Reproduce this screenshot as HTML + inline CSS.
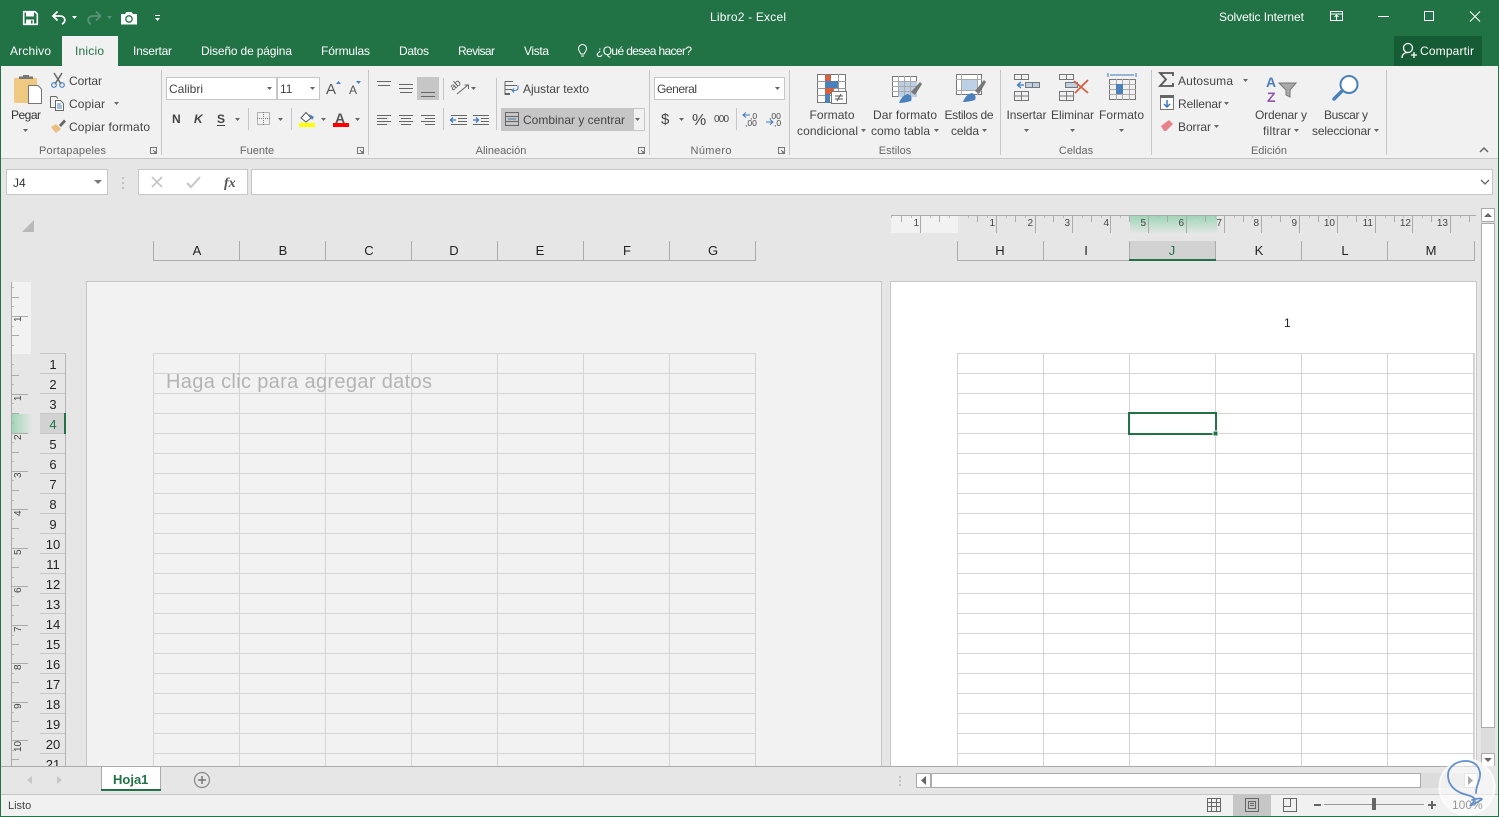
<!DOCTYPE html>
<html lang="es"><head><meta charset="utf-8"><title>Libro2 - Excel</title>
<style>
html,body{margin:0;padding:0;background:#e6e6e6;width:1499px;height:817px;overflow:hidden}
svg{display:block;position:absolute;left:0;top:0}
text{font-family:"Liberation Sans",sans-serif;font-size:12px;fill:#444}
.w{fill:#fff}.m{text-anchor:middle}.g{fill:#666;font-size:11px;text-anchor:middle}
.h{fill:#222;text-anchor:middle;font-size:13px}.r{fill:#222;text-anchor:middle;font-size:13px}
.v{fill:#444;font-size:10px}
</style></head><body>
<svg width="1499" height="817" viewBox="0 0 1499 817" xmlns="http://www.w3.org/2000/svg">
<defs>
<polygon id="c" points="0,0 5,0 2.5,3" fill="#666"/>
<pattern id="grid" x="153" y="353" width="86" height="20" patternUnits="userSpaceOnUse"><path d="M0 .5H86M.5 0V20" stroke="#d4d4d4" fill="none"/></pattern>
<pattern id="grid2" x="957" y="353" width="86" height="20" patternUnits="userSpaceOnUse"><path d="M0 .5H86M.5 0V20" stroke="#d4d4d4" fill="none"/></pattern>
<linearGradient id="gv" x1="0" y1="0" x2="0" y2="1"><stop offset="0" stop-color="#9fd6b8"/><stop offset="1" stop-color="#e6e6e6"/></linearGradient>
<linearGradient id="gh" x1="0" y1="0" x2="1" y2="0"><stop offset="0" stop-color="#9fd6b8"/><stop offset="1" stop-color="#e6e6e6"/></linearGradient>
</defs>

<!-- frame / backgrounds -->
<rect width="1499" height="817" fill="#217346"/>
<rect x="1" y="66" width="1497" height="750" fill="#e6e6e6"/>
<rect x="1" y="66" width="1497" height="92" fill="#f1f1f1"/>
<rect x="1" y="158" width="1497" height="1" fill="#c6c6c6"/>

<!-- QAT -->
<g fill="none" stroke="#fff">
<path d="M23.700 11.700H35L37.300 14V24.300H23.700Z" stroke-width="1.600"/>
<rect x="26" y="12" width="8" height="4.500" fill="#fff" stroke="none"/>
<rect x="26" y="19.500" width="8" height="5" fill="#fff" stroke="none"/><rect x="31" y="20.500" width="1.600" height="3" fill="#217346" stroke="none"/>
<path d="M57.500 11.500L53 16L57.500 20.500M53.500 16H60C65.500 16 66.500 22 62 24" stroke-width="1.800"/>
</g>
<polygon points="72,16 77,16 74.500,19" fill="#fff"/>
<path d="M96 11.500L100.500 16L96 20.500M100 16H93C87.500 16 86.500 22 91 24" fill="none" stroke="#5a9478" stroke-width="1.800"/>
<polygon points="107,16 112,16 109.500,19" fill="#5a9478"/>
<path d="M121 14H125L126.500 12H131.500L133 14H137V24.500H121Z" fill="#fff"/>
<circle cx="129" cy="19" r="3.200" fill="none" stroke="#217346" stroke-width="1.300"/>
<rect x="155" y="15" width="5" height="1" fill="#fff"/><polygon points="155,18 160,18 157.500,21" fill="#fff"/>

<!-- title -->
<text x="710" y="21" class="w" textLength="76">Libro2  -  Excel</text>
<text x="1219" y="21" class="w" textLength="85">Solvetic Internet</text>
<g fill="none" stroke="#fff">
<rect x="1330.500" y="11.500" width="12" height="9"/><path d="M1331 14H1342M1336.500 20V15.500M1334.500 17L1336.500 15L1338.500 17"/>
<path d="M1378 16.500H1389"/>
<rect x="1424.500" y="11.500" width="9" height="9"/>
<path d="M1470 11.500L1480 21.500M1480 11.500L1470 21.500"/>
</g>

<!-- tabs -->
<rect x="62" y="36" width="56" height="30" fill="#f1f1f1"/>
<text x="10" y="55" class="w" textLength="41">Archivo</text>
<text x="75" y="55" style="fill:#217346" textLength="29">Inicio</text>
<text x="133" y="55" class="w" textLength="39">Insertar</text>
<text x="201" y="55" class="w" textLength="91">Diseño de página</text>
<text x="321" y="55" class="w" textLength="49">Fórmulas</text>
<text x="399" y="55" class="w" textLength="30">Datos</text>
<text x="458" y="55" class="w" textLength="37">Revisar</text>
<text x="524" y="55" class="w" textLength="25">Vista</text>
<path d="M581 54C579 51 578.500 50 578.500 48.500A4 4 0 0 1 586.500 48.500C586.500 50 586 51 584 54ZM581 56H584" fill="none" stroke="#fff"/>
<text x="596" y="55" class="w" textLength="96">¿Qué desea hacer?</text>
<rect x="1394" y="36" width="88" height="30" fill="#155b33"/>
<circle cx="1408" cy="48" r="4.500" fill="none" stroke="#fff" stroke-width="1.300"/>
<path d="M1402 58C1402 54 1405 52.500 1408 52.500M1411 55H1417M1414 52V58" fill="none" stroke="#fff" stroke-width="1.300"/>
<text x="1420" y="55" class="w" textLength="54">Compartir</text>

<!-- ribbon separators -->
<g fill="#c6c6c6"><rect x="161" y="70" width="1" height="85"/><rect x="368" y="70" width="1" height="85"/><rect x="649" y="70" width="1" height="85"/><rect x="789" y="70" width="1" height="85"/><rect x="1000" y="70" width="1" height="85"/><rect x="1151" y="70" width="1" height="85"/><rect x="1386" y="70" width="1" height="85"/>
<rect x="248" y="108" width="1" height="22"/><rect x="291" y="108" width="1" height="22"/><rect x="443" y="78" width="1" height="22"/><rect x="443" y="108" width="1" height="22"/><rect x="496" y="78" width="1" height="52"/><rect x="736" y="108" width="1" height="22"/></g>

<!-- group labels -->
<text x="72.500" y="154" class="g" textLength="67">Portapapeles</text><text x="257" y="154" class="g">Fuente</text><text x="501" y="154" class="g">Alineación</text><text x="711" y="154" class="g" textLength="41">Número</text><text x="895" y="154" class="g">Estilos</text><text x="1076" y="154" class="g">Celdas</text><text x="1269" y="154" class="g">Edición</text>
<g fill="none" stroke="#777"><path d="M150.500 147.500H156.500V153.500H150.500ZM153 150L156 153M156 151V153H154"/><path d="M357.500 147.500H363.500V153.500H357.500ZM360 150L363 153M363 151V153H361"/><path d="M638.500 147.500H644.500V153.500H638.500ZM641 150L644 153M644 151V153H642"/><path d="M778.500 147.500H784.500V153.500H778.500ZM781 150L784 153M784 151V153H782"/></g>
<path d="M1480 152L1484 148L1488 152" fill="none" stroke="#666" stroke-width="1.500"/>

<!-- portapapeles -->
<path d="M15 78H37V85H28V103H16Q14 103 14 101V79Q14 78 15 78Z" fill="#efc981"/>
<path d="M19 79V76.500H23V75H29V76.500H33V79Z" fill="#777"/>
<path d="M28.500 85.500H38L41.500 89V103.500H28.500Z" fill="#fff" stroke="#777"/>
<text x="11" y="119" style="fill:#333" textLength="30">Pegar</text><use href="#c" x="23" y="129"/>
<path d="M54 73L61 84M62 73L55 84" stroke="#666" stroke-width="1.500" fill="none"/><circle cx="54" cy="85" r="2.300" fill="none" stroke="#4a80c0" stroke-width="1.200"/><circle cx="62" cy="85" r="2.300" fill="none" stroke="#4a80c0" stroke-width="1.200"/>
<text x="69" y="85" textLength="33">Cortar</text>
<path d="M50.500 96.500H56L58 98.500M50.500 96.500V107.500H55" fill="none" stroke="#666"/><path d="M55.500 100.500H60.500L63.500 103.500V110.500H55.500Z" fill="#fff" stroke="#666"/><path d="M57 104H61M57 106H62M57 108H62" stroke="#4a80c0"/>
<text x="69" y="108" textLength="36">Copiar</text><use href="#c" x="114" y="102"/>
<path d="M51 127L56 124L61 129L56 133Q53 130 51 127Z" fill="#e8bf7d"/><path d="M59 125L64 119.500L66 121.500L61 127Z" fill="#666"/>
<text x="69" y="131" textLength="81">Copiar formato</text>

<!-- fuente -->
<rect x="166.500" y="77.500" width="110" height="22" fill="#fff" stroke="#c6c6c6"/><rect x="277.500" y="77.500" width="42" height="22" fill="#fff" stroke="#c6c6c6"/>
<text x="169" y="93" textLength="34">Calibri</text><text x="280" y="93">11</text>
<use href="#c" x="267" y="87"/><use href="#c" x="310" y="87"/>
<text x="326" y="94" style="font-size:15px;fill:#555">A</text><polygon points="336,84 341,84 338.500,81" fill="#4a80c0"/>
<text x="349" y="94" style="font-size:12px;fill:#555">A</text><polygon points="356,81 361,81 358.500,84" fill="#4a80c0"/>
<text x="172" y="123" style="font-weight:bold;font-size:12px">N</text>
<text x="194" y="123" style="font-weight:bold;font-style:italic;font-size:12px">K</text>
<text x="217" y="123" style="font-weight:bold;font-size:12px">S</text><rect x="217" y="125" width="8" height="1" fill="#444"/><use href="#c" x="235" y="118"/>
<rect x="257.500" y="112.500" width="12" height="12" fill="none" stroke="#777" stroke-dasharray="1 1"/><path d="M263.500 112V125M257 118.500H270" stroke="#777" stroke-dasharray="1 1"/><use href="#c" x="278" y="118"/>
<path d="M301 118L306 112.500L311 118L306 122Z" fill="#fff" stroke="#555"/><path d="M309 114L314 117L312 120Z" fill="#4a80c0"/><rect x="299" y="123" width="16" height="4" fill="#ff0"/><use href="#c" x="321" y="118"/>
<text x="335" y="123" style="font-size:14px;font-weight:bold;fill:#555">A</text><rect x="333" y="123" width="16" height="4" fill="#f00"/><use href="#c" x="355" y="118"/>

<!-- alineacion -->
<rect x="417" y="77" width="22" height="23" fill="#c6c6c6"/>
<g stroke="#666" fill="none"><path d="M377 81.500H391M378 85.500H390"/><path d="M399 84.500H413M399 88.500H413M400 92.500H412"/><path d="M421 92.500H435M421 96.500H435"/>
<path d="M377 115.500H391M377 118.500H387M377 121.500H391M377 124.500H387"/><path d="M399 115.500H413M401 118.500H411M399 121.500H413M401 124.500H411"/><path d="M421 115.500H435M425 118.500H435M421 121.500H435M425 124.500H435"/>
<path d="M451 115.500H467M458 118.500H467M458 121.500H467M451 124.500H467M473 115.500H489M481 118.500H489M481 121.500H489M473 124.500H489"/></g>
<path d="M456 120H451M453 117.500L450.500 120L453 122.500" stroke="#3c78c0" stroke-width="1.300" fill="none"/><path d="M473 120H478M476 117.500L478.500 120L476 122.500" stroke="#3c78c0" stroke-width="1.300" fill="none"/>
<path d="M457 94L468 85M464.500 85H468.500V89" stroke="#666" fill="none"/><text x="453" y="91" style="font-size:10px;fill:#555" transform="rotate(-40 453 91)">ab</text><use href="#c" x="471" y="87"/>
<path d="M505 81.500H513M505 81.500V94.500H510M505 85.500H517M505 89.500H512M505 93.500H510" stroke="#666" fill="none"/><path d="M518 85.500V88C518 90.500 516 90.500 512 90.500M514 88.500L512 90.500L514 92.500" stroke="#3c78c0" fill="none"/>
<text x="523" y="93" textLength="66">Ajustar texto</text>
<rect x="501" y="108" width="132" height="23" fill="#c6c6c6"/><rect x="633.500" y="108.500" width="11" height="22" fill="#f1f1f1" stroke="#c6c6c6"/>
<rect x="505.500" y="112.500" width="13" height="13" fill="none" stroke="#666"/><path d="M506 116.500H518M506 121.500H518" stroke="#666"/><path d="M508 119H516" stroke="#3c78c0"/>
<text x="523" y="124" textLength="102">Combinar y centrar</text><use href="#c" x="635" y="118"/>

<!-- numero -->
<rect x="654.500" y="77.500" width="130" height="22" fill="#fff" stroke="#c6c6c6"/><text x="657" y="93" textLength="40">General</text><use href="#c" x="775" y="87"/>
<text x="661" y="124" style="font-size:15px">$</text><use href="#c" x="679" y="118"/>
<text x="692" y="125" style="font-size:16px" textLength="14">%</text><text x="714" y="122" style="font-size:10px" textLength="15">000</text>
<path d="M750 115H743M746 112.500L743 115L746 117.500" stroke="#3c78c0" fill="none"/><text x="750" y="119" style="font-size:8.500px">,0</text><text x="745" y="126" style="font-size:8.500px">,00</text>
<text x="769" y="119" style="font-size:8.500px">,00</text><path d="M766 122H773M770 119.500L773 122L770 124.500" stroke="#3c78c0" fill="none"/><text x="774" y="126" style="font-size:8.500px">,0</text>

<!-- estilos -->
<g>
<rect x="817.500" y="74.500" width="28" height="28" fill="#fff" stroke="#777"/>
<path d="M817 81.500H846M817 88.500H846M817 95.500H846M825.500 74V103M838.500 74V103" stroke="#999" fill="none"/>
<rect x="825" y="75" width="6" height="6" fill="#d9603c"/><rect x="825" y="81" width="13" height="7" fill="#4a80bb"/><rect x="825" y="88" width="9" height="6" fill="#d9603c"/><rect x="825" y="94" width="5" height="9" fill="#4a80bb"/>
<rect x="831.500" y="91.500" width="15" height="12" fill="#fff" stroke="#777"/><path d="M835 96H843M835 99H843M841 94L837 101" stroke="#555" fill="none"/>
<rect x="892.500" y="76.500" width="24" height="20" fill="#fff" stroke="#777"/><rect x="898" y="81" width="19" height="16" fill="#bcd0e5"/><path d="M892 81.500H917M892 86.500H917M892 91.500H917M898.500 76V97M904.500 76V97M910.500 76V97" stroke="#aaa" fill="none"/>
<path d="M911 92L920 82L922 84L915 95Z" fill="#777"/><path d="M899 103Q902 95 908 94Q913 96 911 101Q904 103 899 103Z" fill="#4a80bb"/>
<rect x="956.500" y="74.500" width="25" height="20" fill="#fff" stroke="#777"/><rect x="962" y="79" width="15" height="11" fill="#bcd0e5"/><path d="M956 79.500H982M956 90.500H982M961.500 74V95M977.500 74V95" stroke="#aaa" fill="none"/>
<path d="M975 91L984 80L986 82L979 94Z" fill="#777"/><path d="M963 102Q966 94 972 93Q977 95 975 100Q968 102 963 102Z" fill="#4a80bb"/>
</g>
<text x="832" y="119" class="m" textLength="45">Formato</text><text x="797" y="135" textLength="61">condicional</text><use href="#c" x="861" y="129"/>
<text x="905" y="119" class="m" textLength="64">Dar formato</text><text x="871" y="135" textLength="59">como tabla</text><use href="#c" x="934" y="129"/>
<text x="969" y="119" class="m" textLength="49">Estilos de</text><text x="951" y="135" textLength="28">celda</text><use href="#c" x="982" y="129"/>

<!-- celdas -->
<g fill="none" stroke="#777">
<rect x="1014.500" y="74.500" width="14" height="5"/><path d="M1021.500 74V80"/><rect x="1025.500" y="82.500" width="14" height="5" fill="#bcd0e5"/><path d="M1032.500 82V88"/><rect x="1014.500" y="91.500" width="14" height="9"/><path d="M1021.500 91V101M1014 96H1029"/>
<rect x="1059.500" y="74.500" width="14" height="5"/><path d="M1066.500 74V80"/><rect x="1065.500" y="82.500" width="12" height="5" fill="#bcd0e5"/><rect x="1059.500" y="91.500" width="14" height="9"/><path d="M1066.500 91V101M1059 96H1074"/>
<rect x="1109.500" y="79.500" width="26" height="20"/><path d="M1109 84.500H1136M1109 89.500H1136M1109 94.500H1136M1116.500 79V100M1122.500 79V100M1129.500 79V100" stroke="#aaa"/>
</g>
<path d="M1074 81L1088 93M1088 80L1075 93" stroke="#d9603c" stroke-width="1.800" fill="none"/>
<path d="M1024 85H1018M1021 82L1017.500 85L1021 88" stroke="#3c78c0" stroke-width="1.300" fill="none"/>
<path d="M1108 73V77M1136 73V77M1110 75H1134" stroke="#3c78c0" fill="none"/><rect x="1116" y="84" width="7" height="10" fill="#4a80bb"/>
<text x="1026.500" y="119" class="m" textLength="40">Insertar</text><use href="#c" x="1024" y="129"/>
<text x="1072.500" y="119" class="m" textLength="43">Eliminar</text><use href="#c" x="1070" y="129"/>
<text x="1121.500" y="119" class="m" textLength="45">Formato</text><use href="#c" x="1119" y="129"/>

<!-- edicion -->
<path d="M1173 76V73H1160L1166 79.500L1160 86H1173V83" fill="none" stroke="#555" stroke-width="1.800"/>
<text x="1178" y="85" textLength="55">Autosuma</text><use href="#c" x="1243" y="79"/>
<rect x="1160.500" y="95.500" width="13" height="14" fill="#fff" stroke="#777"/><rect x="1160" y="95" width="14" height="3" fill="#666"/><path d="M1167 100V107M1164 104L1167 107L1170 104" stroke="#3c78c0" stroke-width="1.500" fill="none"/>
<text x="1178" y="108" textLength="44">Rellenar</text><use href="#c" x="1224" y="102"/>
<path d="M1161 126L1169 120L1173 124L1166 131H1164Z" fill="#e8808c"/>
<text x="1178" y="131" textLength="33">Borrar</text><use href="#c" x="1214" y="125"/>
<text x="1266" y="87" style="font-size:14px;font-weight:bold;fill:#4a80bb">A</text><text x="1267" y="102" style="font-size:14px;font-weight:bold;fill:#8c5aa8">Z</text>
<path d="M1279 83H1296L1290 90V97L1286 95V90Z" fill="#aaa" stroke="#777"/>
<text x="1281" y="119" class="m" textLength="52">Ordenar y</text><text x="1263" y="135" textLength="28">filtrar</text><use href="#c" x="1294" y="129"/>
<circle cx="1349" cy="84.500" r="8.500" fill="#fff" stroke="#4a80bb" stroke-width="2"/><path d="M1342 91L1334 99" stroke="#4a80bb" stroke-width="3.500" stroke-linecap="round"/>
<text x="1346" y="119" class="m" textLength="44">Buscar y</text><text x="1312" y="135" textLength="59">seleccionar</text><use href="#c" x="1374" y="129"/>

<!-- formula bar -->
<rect x="6.500" y="169.500" width="101" height="25" fill="#fff" stroke="#c6c6c6"/><text x="13" y="187" style="fill:#333">J4</text><polygon points="94,180 102,180 98,184" fill="#777"/>
<path d="M123 177v2M123 182v2M123 187v2" stroke="#999"/>
<rect x="138.500" y="169.500" width="109" height="25" fill="#fff" stroke="#c6c6c6"/>
<path d="M152 177L162 187M162 177L152 187" stroke="#c6c6c6" stroke-width="1.700" fill="none"/><path d="M187 183L191 187L200 177" stroke="#c6c6c6" stroke-width="2" fill="none"/>
<text x="224" y="187" style="font-family:'Liberation Serif',serif;font-style:italic;font-weight:bold;font-size:14px;fill:#555">fx</text>
<rect x="251.500" y="169.500" width="1241" height="25" fill="#fff" stroke="#c6c6c6"/><path d="M1481 180L1485 184L1489 180" fill="none" stroke="#666" stroke-width="1.300"/>

<!-- corner -->
<polygon points="34,220 34,232 22,232" fill="#b9b9b9"/>

<!-- pages -->
<rect x="86.500" y="281.500" width="795" height="500" fill="#f2f2f2" stroke="#c6c6c6"/>
<rect x="890.500" y="281.500" width="586" height="500" fill="#fff" stroke="#c6c6c6"/>
<rect x="153" y="353" width="603" height="414" fill="url(#grid)"/><rect x="755" y="353" width="1" height="414" fill="#d4d4d4"/>
<rect x="957" y="353" width="518" height="414" fill="url(#grid2)"/><rect x="1474" y="353" width="1" height="414" fill="#d4d4d4"/>
<text x="166" y="388" style="font-size:20px;fill:#b4b4b4" textLength="266">Haga clic para agregar datos</text>
<text x="1284" y="327" style="font-size:12px;fill:#222">1</text>
<rect x="1129" y="413" width="87" height="21" fill="none" stroke="#217346" stroke-width="2"/><rect x="1213" y="431" width="5" height="5" fill="#217346" stroke="#fff"/>

<!-- column headers -->
<g>
<rect x="1129" y="241" width="87" height="19" fill="#d2d2d2"/>
<path d="M153.500 241V260.500H755.500V241M239.500 241V260M325.500 241V260M411.500 241V260M497.500 241V260M583.500 241V260M669.500 241V260" fill="none" stroke="#ababab"/>
<path d="M957.500 241V260.500H1474.500V241M1043.500 241V260M1129.500 241V260M1215.500 241V260M1301.500 241V260M1387.500 241V260" fill="none" stroke="#ababab"/>
<rect x="1129" y="259" width="87" height="2" fill="#217346"/>
<text x="197" y="255" class="h">A</text><text x="283" y="255" class="h">B</text><text x="369" y="255" class="h">C</text><text x="454" y="255" class="h">D</text><text x="540" y="255" class="h">E</text><text x="627" y="255" class="h">F</text><text x="713" y="255" class="h">G</text>
<text x="1000" y="255" class="h">H</text><text x="1086" y="255" class="h">I</text><text x="1172" y="255" class="h" style="fill:#217346">J</text><text x="1259" y="255" class="h">K</text><text x="1345" y="255" class="h">L</text><text x="1431" y="255" class="h">M</text>
</g>

<!-- row headers -->
<rect x="40" y="414" width="24" height="19" fill="#d2d2d2"/>
<path d="M40 353.500H65M40 373.500H65M40 393.500H65M40 413.500H65M40 433.500H65M40 453.500H65M40 473.500H65M40 493.500H65M40 513.500H65M40 533.500H65M40 553.500H65M40 573.500H65M40 593.500H65M40 613.500H65M40 633.500H65M40 653.500H65M40 673.500H65M40 693.500H65M40 713.500H65M40 733.500H65M40 753.500H65" fill="none" stroke="#c6c6c6"/>
<path d="M65.500 353V766" stroke="#b5b5b5"/>
<rect x="64" y="413" width="2" height="21" fill="#217346"/>
<g>
<text x="53" y="369" class="r">1</text><text x="53" y="389" class="r">2</text><text x="53" y="409" class="r">3</text><text x="53" y="429" class="r" style="fill:#217346">4</text><text x="53" y="449" class="r">5</text><text x="53" y="469" class="r">6</text><text x="53" y="489" class="r">7</text><text x="53" y="509" class="r">8</text><text x="53" y="529" class="r">9</text><text x="53" y="549" class="r">10</text><text x="53" y="569" class="r">11</text><text x="53" y="589" class="r">12</text><text x="53" y="609" class="r">13</text><text x="53" y="629" class="r">14</text><text x="53" y="649" class="r">15</text><text x="53" y="669" class="r">16</text><text x="53" y="689" class="r">17</text><text x="53" y="709" class="r">18</text><text x="53" y="729" class="r">19</text><text x="53" y="749" class="r">20</text><text x="53" y="769" class="r">21</text>
</g>

<!-- horizontal ruler -->
<rect x="891" y="216" width="67" height="17" fill="#f2f2f2"/>
<rect x="1130" y="216" width="87" height="18" fill="url(#gv)"/>
<path d="M891 215.500H1476" stroke="#ababab"/>
<path d="M920.500 216V233M996.500 216V233M1035.500 216V233M1072.500 216V233M1110.500 216V233M1148.500 216V233M1186.500 216V233M1224.500 216V233M1261.500 216V233M1299.500 216V233M1337.500 216V233M1375.500 216V233M1412.500 216V233M1450.500 216V233" stroke="#ababab" fill="none"/>
<path d="M901.500 216V222M939.500 216V222M977.500 216V222M1015.500 216V222M1053.500 216V222M1091.500 216V222M1129.500 216V222M1167.500 216V222M1205.500 216V222M1243.500 216V222M1280.500 216V222M1318.500 216V222M1356.500 216V222M1394.500 216V222M1431.500 216V222M1469.500 216V222" stroke="#ababab" fill="none"/>
<path d="M891.500 216V218M911.500 216V218M930.500 216V218M949.500 216V218M968.500 216V218M987.500 216V218M1006.500 216V218M1025.500 216V218M1044.500 216V218M1063.500 216V218M1082.500 216V218M1101.500 216V218M1120.500 216V218M1139.500 216V218M1158.500 216V218M1177.500 216V218M1196.500 216V218M1215.500 216V218M1234.500 216V218M1252.500 216V218M1271.500 216V218M1290.500 216V218M1309.500 216V218M1328.500 216V218M1347.500 216V218M1366.500 216V218M1385.500 216V218M1403.500 216V218M1422.500 216V218M1441.500 216V218M1460.500 216V218" stroke="#bbb" fill="none"/>
<g style="text-anchor:end">
<text x="919" y="226" class="v">1</text><text x="995" y="226" class="v">1</text><text x="1033" y="226" class="v">2</text><text x="1070" y="226" class="v">3</text><text x="1109" y="226" class="v">4</text><text x="1146" y="226" class="v">5</text><text x="1184" y="226" class="v">6</text><text x="1222" y="226" class="v">7</text><text x="1259" y="226" class="v">8</text><text x="1297" y="226" class="v">9</text><text x="1335" y="226" class="v">10</text><text x="1373" y="226" class="v">11</text><text x="1411" y="226" class="v">12</text><text x="1448" y="226" class="v">13</text>
</g>

<!-- vertical ruler -->
<rect x="12" y="282" width="19" height="72" fill="#f2f2f2"/>
<rect x="12" y="414" width="20" height="20" fill="url(#gh)"/>
<path d="M11.500 282V766" stroke="#ababab"/>
<path d="M12 316.500H28M12 394.500H28M12 433.500H28M12 471.500H28M12 509.500H28M12 548.500H28M12 586.500H28M12 625.500H28M12 663.500H28M12 702.500H28M12 740.500H28" stroke="#ababab" fill="none"/>
<path d="M12 297.500H19M12 335.500H19M12 375.500H19M12 413.500H19M12 452.500H19M12 490.500H19M12 528.500H19M12 567.500H19M12 605.500H19M12 644.500H19M12 682.500H19M12 721.500H19M12 759.500H19" stroke="#ababab" fill="none"/>
<path d="M12 287.500H14M12 306.500H14M12 326.500H14M12 345.500H14M12 364.500H14M12 384.500H14M12 403.500H14M12 423.500H14M12 442.500H14M12 461.500H14M12 480.500H14M12 500.500H14M12 519.500H14M12 538.500H14M12 558.500H14M12 577.500H14M12 596.500H14M12 615.500H14M12 635.500H14M12 654.500H14M12 673.500H14M12 692.500H14M12 712.500H14M12 731.500H14M12 750.500H14" stroke="#bbb" fill="none"/>
<g>
<text class="v" transform="translate(21,322) rotate(-90)">1</text><text class="v" transform="translate(21,401) rotate(-90)">1</text><text class="v" transform="translate(21,440) rotate(-90)">2</text><text class="v" transform="translate(21,478) rotate(-90)">3</text><text class="v" transform="translate(21,516) rotate(-90)">4</text><text class="v" transform="translate(21,555) rotate(-90)">5</text><text class="v" transform="translate(21,593) rotate(-90)">6</text><text class="v" transform="translate(21,632) rotate(-90)">7</text><text class="v" transform="translate(21,670) rotate(-90)">8</text><text class="v" transform="translate(21,709) rotate(-90)">9</text><text class="v" transform="translate(21,752) rotate(-90)">10</text>
</g>

<!-- vertical scrollbar -->
<rect x="1478" y="196" width="20" height="570" fill="#e6e6e6"/>
<rect x="1481" y="208" width="14" height="558" fill="#dcdcdc"/>
<rect x="1481.500" y="208.500" width="13" height="13" fill="#fff" stroke="#ababab"/><polygon points="1484,217 1492,217 1488,213" fill="#666"/>
<rect x="1481.500" y="223.500" width="13" height="504" fill="#fff" stroke="#ababab"/>
<rect x="1481.500" y="753.500" width="13" height="13" fill="#fff" stroke="#ababab"/><polygon points="1484,758 1492,758 1488,762" fill="#666"/>

<!-- tab bar -->
<rect x="1" y="766" width="1497" height="28" fill="#e6e6e6"/>
<rect x="1" y="766" width="1477" height="1" fill="#ababab"/>
<polygon points="32,776 27,780 32,784" fill="#c6c6c6"/><polygon points="57,776 62,780 57,784" fill="#c6c6c6"/>
<path d="M101.500 790V766.500H160.500V790" fill="#fff" stroke="#ababab"/><rect x="102" y="767" width="58" height="23" fill="#fff"/>
<rect x="101" y="789" width="60" height="2" fill="#217346"/>
<text x="113" y="784" style="font-weight:bold;font-size:13px;fill:#217346">Hoja1</text>
<circle cx="202" cy="780" r="7.500" fill="none" stroke="#888" stroke-width="1.200"/><path d="M198 780H206M202 776V784" stroke="#777" stroke-width="1.500"/>
<path d="M900 776v2M900 780v2M900 784v2" stroke="#999"/>
<rect x="916" y="773" width="562" height="15" fill="#dcdcdc"/>
<rect x="916.500" y="773.500" width="14" height="14" fill="#fff" stroke="#ababab"/><polygon points="926,776 921,780.500 926,785" fill="#666"/>
<rect x="931.500" y="773.500" width="489" height="14" fill="#fff" stroke="#ababab"/>
<rect x="1464.500" y="773.500" width="13" height="14" fill="#fff" stroke="#c6c6c6"/><polygon points="1468,776 1473,780.500 1468,785" fill="#aaa"/>

<!-- status bar -->
<rect x="1" y="794" width="1497" height="22" fill="#f1f1f1"/><rect x="1" y="794" width="1497" height="1" fill="#c6c6c6"/>
<text x="8" y="809" style="font-size:11px">Listo</text>
<rect x="1233" y="795" width="38" height="21" fill="#c6c6c6"/>
<g fill="none" stroke="#666"><path d="M1207.500 798.500H1220.500V811.500H1207.500ZM1207 802.500H1221M1207 806.500H1221M1211.500 798V812M1216.500 798V812"/><rect x="1245.500" y="798.500" width="13" height="13"/><rect x="1248.500" y="801.500" width="7" height="7"/><path d="M1250 803.500H1254M1250 805.500H1254"/><path d="M1283.500 798.500H1296.500V811.500H1283.500ZM1283 806.500H1290.500V798"/></g>
<rect x="1314" y="804" width="7" height="2" fill="#666"/>
<rect x="1324" y="804" width="100" height="1" fill="#999"/><rect x="1372" y="798" width="4" height="12" fill="#666"/>
<path d="M1428 805H1436M1432 801V809" stroke="#666" stroke-width="2"/>

<!-- watermark -->
<circle cx="1467" cy="787" r="27" fill="#fff" fill-opacity=".55"/>
<circle cx="1467" cy="787" r="27.500" fill="none" stroke="#fff" stroke-opacity=".8" stroke-width="2"/>
<polygon points="1468,776 1473,780.500 1468,785" fill="#aaa"/>
<text x="1452" y="809" style="fill:#999;font-size:12px">100%</text>
<path d="M1480 773C1479 766 1474 761 1466 761C1456 761 1448 767 1448 775C1448 783 1452 789 1461 793C1469 796 1474 796 1475 800C1472 805 1468 806 1472 805L1481 800C1484 798 1478 798 1472 800" fill="none" stroke="#6491cb" stroke-width="1.800" stroke-linecap="round"/>
<path d="M1480 773C1481 780 1476 784 1476 793" fill="none" stroke="#6491cb" stroke-width="1.800" stroke-linecap="round"/>
</svg>
</body></html>
